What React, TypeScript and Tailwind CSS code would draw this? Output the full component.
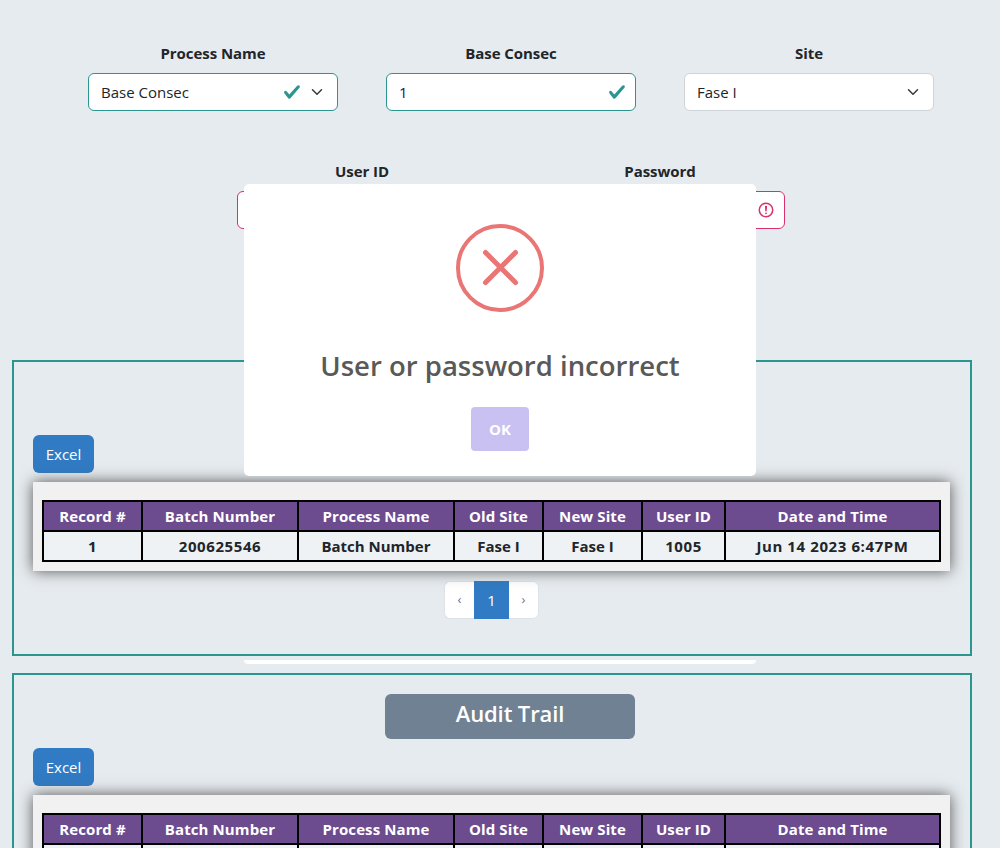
import type { ReactNode } from "react";

const columns = ["Record #", "Batch Number", "Process Name", "Old Site", "New Site", "User ID", "Date and Time"];
const widths = [99, 156, 156, 89, 99, 83, 215];
const record = ["1", "200625546", "Batch Number", "Fase I", "Fase I", "1005", "Jun 14 2023 6:47PM"];

function Check() {
  return (
    <svg viewBox="0 0 8 8" className="h-[18px] w-[18px]">
      <path fill="#2d9590" d="M2.3 6.73.6 4.53c-.4-1.04.46-1.4 1.1-.8l1.1 1.4 3.4-3.8c.6-.63 1.6-.27 1.2.7l-4 4.6c-.43.5-.8.4-1.1.1z" />
    </svg>
  );
}

function Chevron() {
  return (
    <svg viewBox="0 0 16 16" className="h-3 w-4">
      <path fill="none" stroke="#343a40" strokeLinecap="round" strokeLinejoin="round" strokeWidth="2" d="m2 5 6 6 6-6" />
    </svg>
  );
}

function Alert() {
  return (
    <svg viewBox="0 0 12 12" className="h-[18px] w-[18px]" fill="none" stroke="#d9316f">
      <circle cx="6" cy="6" r="4.5" />
      <path strokeLinejoin="round" d="M5.8 3.6h.4L6 6.5z" />
      <circle cx="6" cy="8.2" r=".6" fill="#d9316f" stroke="none" />
    </svg>
  );
}

function Field({ label, border, children }: { label: string; border: string; children?: ReactNode }) {
  return (
    <div className="w-[250px]">
      <div className="mb-2.5 h-5 text-center text-[15px] leading-5 font-bold tracking-[-0.06px] whitespace-nowrap">{label}</div>
      <div className={`flex h-[38px] items-center rounded-[6px] border bg-white px-3 text-[15px] ${border}`}>{children}</div>
    </div>
  );
}

function Panel({ title, row, children }: { title: string; row?: string[]; children?: ReactNode }) {
  return (
    <section className="h-[296px] w-[960px] border-2 border-[#2d9590] px-[19px] pt-[19px]">
      <h2 className="ml-[352px] h-[45px] w-[250px] rounded-[6px] bg-[#6f8192] text-center text-[22px] leading-[38px] font-semibold tracking-[-0.1px] text-white">
        {title}
      </h2>
      <button className="mt-[9px] block h-[38px] w-[61px] rounded-[6px] bg-[#307bc3] text-[15px] text-white">Excel</button>
      <div className="relative z-20 mt-[9px] h-[89px] w-[917px] bg-[#f1f1f1] px-[9px] pt-[18px] shadow-[0_0_14px_#555]">
        <table className="w-[899px] table-fixed border-collapse text-center text-[15px] leading-[20px] font-bold">
          <colgroup>
            {widths.map((w, i) => (
              <col key={i} style={{ width: w }} />
            ))}
          </colgroup>
          <thead>
            <tr className="h-[30px] bg-[#6c4b8f] tracking-[0.1px] text-white">
              {columns.map((c) => (
                <th key={c} className="border-2 border-black p-0 whitespace-nowrap">{c}</th>
              ))}
            </tr>
          </thead>
          <tbody>
            <tr className="h-[30px] bg-[#eef2f5]">
              {columns.map((c, i) => (
                <td
                  key={c}
                  className={`border-2 border-black p-0 whitespace-nowrap ${/\d/.test(row?.[i] ?? "") ? "tracking-[0.6px]" : ""}`}
                >
                  {row?.[i]}
                </td>
              ))}
            </tr>
          </tbody>
        </table>
      </div>
      {children}
    </section>
  );
}

export default function App() {
  return (
    <div className="relative h-[848px] w-[1000px] overflow-hidden bg-[#e6ebef] font-['Open_Sans','Noto_Sans',sans-serif] text-[#212529]">
      <div className="flex h-[360px] flex-col pt-[43px]">
        <div className="ml-[88px] flex gap-12">
          <Field label="Process Name" border="border-[#2d9590]">
            <span className="flex-1">Base Consec</span>
            <Check />
            <span className="ml-2"><Chevron /></span>
          </Field>
          <Field label="Base Consec" border="border-[#2d9590]">
            <span className="flex-1 text-[#1b1464]">1</span>
            <span className="-mr-[3px]"><Check /></span>
          </Field>
          <Field label="Site" border="border-[#ced4da]">
            <span className="flex-1">Fase I</span>
            <Chevron />
          </Field>
        </div>
        <div className="mt-[50px] ml-[237px] flex gap-12">
          <Field label="User ID" border="border-[#d9316f]" />
          <Field label="Password" border="border-[#d9316f]">
            <span className="-mr-[3px] ml-auto"><Alert /></span>
          </Field>
        </div>
      </div>

      <div className="ml-3 flex flex-col gap-[17px]">
        <Panel title="Change Site" row={record}>
          <nav className="mt-[10px] ml-[411px] flex h-[38px] w-[95px] items-center text-[15px]">
            <span className="flex h-[38px] w-[30px] items-center justify-center rounded-l-[6px] border border-r-0 border-[#dee2e6] bg-white text-[13px] text-[#6c757d]">‹</span>
            <span className="flex h-[38px] w-[35px] items-center justify-center bg-[#307bc3] text-white">1</span>
            <span className="flex h-[38px] w-[30px] items-center justify-center rounded-r-[6px] border border-l-0 border-[#dee2e6] bg-white text-[13px] text-[#6c757d]">›</span>
          </nav>
        </Panel>
        <Panel title="Audit Trail" />
      </div>

      <div className="absolute top-[184px] left-[244px] z-30 flex h-[292px] w-[512px] flex-col items-center rounded-[5px] bg-white pt-10">
        <svg viewBox="0 0 88 88" className="h-[88px] w-[88px]" fill="none" stroke="#ea7575">
          <circle cx="44" cy="44" r="42" strokeWidth="4" />
          <path d="m29.5 28.5 30 30m0-30-30 30" strokeWidth="5" strokeLinecap="round" />
        </svg>
        <h1 className="mt-[34px] h-10 text-[27.5px] leading-10 font-semibold whitespace-nowrap text-[#595959]">User or password incorrect</h1>
        <button className="mt-[21px] h-11 w-[58px] rounded-[4px] bg-[#c9c1f1] text-[15px] font-bold text-white">OK</button>
      </div>
      <div className="absolute top-[660px] left-[244px] h-1 w-[512px] rounded-b-[5px] bg-white" />
    </div>
  );
}
